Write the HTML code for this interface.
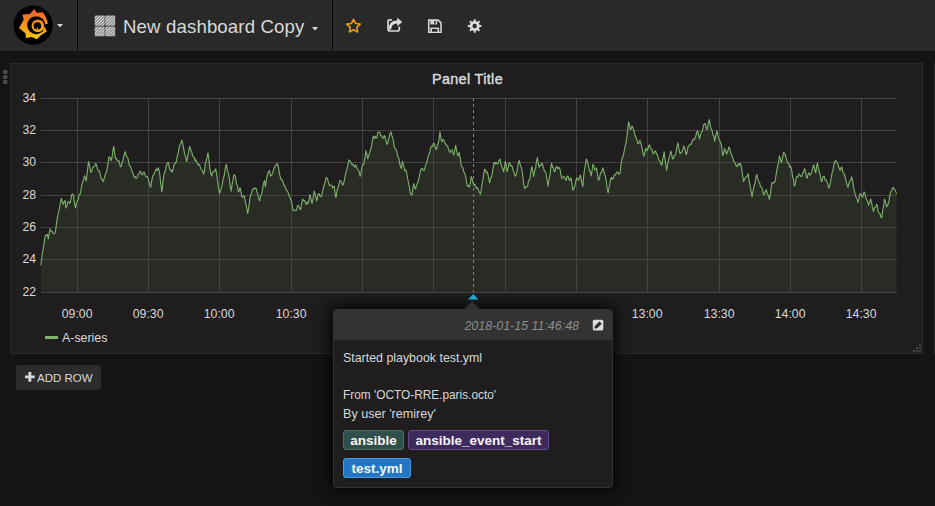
<!DOCTYPE html>
<html><head><meta charset="utf-8">
<style>
*{margin:0;padding:0;box-sizing:border-box}
html,body{width:935px;height:506px;overflow:hidden;background:#141414;font-family:"Liberation Sans",sans-serif;color:#d8d9da}
.abs{position:absolute}
#nav{position:absolute;left:0;top:0;width:935px;height:51px;background:#292929}
.div{position:absolute;top:0;width:1px;height:51px;background:#000;box-shadow:-1px 0 0 #303030,1px 0 0 #303030}
#title{position:absolute;left:123px;top:14px;font-size:18.6px;letter-spacing:0.15px;line-height:26px;color:#d8d9da;white-space:nowrap}
#panel{position:absolute;left:10px;top:63px;width:913px;height:291px;background:#1f1d1d;border:1px solid #2b2a2a}
#ptitle{position:absolute;left:0;width:935px;top:70px;text-align:center;font-size:14.4px;font-weight:400;letter-spacing:0.35px;-webkit-text-stroke:0.45px #d8d9da;line-height:18px;color:#d8d9da}
.yl{position:absolute;left:0;width:36px;text-align:right;font-size:12.2px;line-height:15px;color:#d8d9da}
.xl{position:absolute;top:307px;width:40px;text-align:center;font-size:12.3px;line-height:15px;color:#d8d9da}
#legend{position:absolute;left:62px;top:331px;font-size:12.4px;line-height:15px;color:#d8d9da}
#legline{position:absolute;left:45px;top:336px;width:13px;height:3px;background:#7eb26d}
#addrow{position:absolute;left:16px;top:365px;width:85px;height:25px;background:#2c2c2c;border-radius:3px}
#addrow span{position:absolute;left:21px;top:6px;font-size:11.5px;line-height:15px;color:#d8d9da;white-space:nowrap}
#tip{position:absolute;left:333px;top:309px;width:280px;height:179px;background:#1f1d1d;border:1px solid #333;border-radius:4px;box-shadow:0 0 14px 3px #060606;overflow:hidden}
#tiphead{position:absolute;left:-1px;top:-1px;width:280px;height:31px;background:#333}
#ts{position:absolute;left:-1px;top:9px;width:246px;text-align:right;font-style:italic;font-size:12.45px;line-height:15px;color:#8e8e8e;white-space:nowrap}
.tt{position:absolute;left:9px;font-size:12.4px;line-height:15px;color:#d8d9da;white-space:nowrap}
.tag{position:absolute;height:20px;border-radius:3px;border:1px solid;font-weight:700;font-size:13.5px;line-height:19px;color:#f5f5f5;white-space:nowrap;text-align:center}
</style></head><body>
<div id="nav">
  <svg class="abs" style="left:0;top:0" width="80" height="51" viewBox="0 0 80 51">
    <defs><linearGradient id="lg" gradientUnits="userSpaceOnUse" x1="0" y1="9" x2="0" y2="39"><stop offset="0" stop-color="#f05a28"/><stop offset="1" stop-color="#fbca0a"/></linearGradient></defs>
    <circle cx="33.2" cy="25.1" r="19.6" fill="#000"/>
    <path fill="url(#lg)" d="M34.30,9.00 L36.70,12.70 L42.80,12.20 L45.30,16.00 L47.00,20.00 L47.80,23.80 L45.15,24.26 L44.91,27.45 L46.80,31.60 L41.10,34.90 L36.90,39.30 L31.80,36.90 L26.10,38.00 L25.40,33.20 L19.00,27.90 L23.70,19.80 L22.40,14.40 L29.80,14.10 Z"/>
    <circle cx="36.2" cy="25.2" r="9.0" fill="#000"/>
    <circle cx="37.9" cy="25.7" r="6.3" fill="url(#lg)"/>
    <path fill="url(#lg)" d="M45.51,27.52 L45.35,28.11 L45.14,28.69 L44.90,29.26 L44.62,29.81 L44.31,30.33 L43.97,30.84 L42.85,29.13 L43.07,28.81 L43.26,28.48 L43.44,28.14 L43.59,27.78 L43.72,27.42 L43.82,27.05 Z"/>
    <circle cx="37.4" cy="26.0" r="3.7" fill="#000"/>
    <path fill="url(#lg)" d="M38.70,29.57 L35.79,29.44 L37.30,27.20 Z"/>
    <path d="M57,24 L63,24 L60,27.2 Z" fill="#d8d9da"/>
  </svg>
  <div class="div" style="left:77px"></div>
  <svg class="abs" style="left:94px;top:15px" width="22" height="22" viewBox="0 0 22 22">
    <defs><pattern id="hatch" width="2.2" height="2.2" patternUnits="userSpaceOnUse" patternTransform="rotate(45)"><rect width="1.2" height="2.2" fill="#e4e4e4"/><rect x="1.2" width="1" height="2.2" fill="#8a8a8a"/></pattern></defs>
    <rect x="0.7" y="0.6" width="10" height="10.2" rx="1" fill="url(#hatch)"/>
    <rect x="11.2" y="0.6" width="10" height="10.2" rx="1" fill="url(#hatch)"/>
    <rect x="0.7" y="11.4" width="10" height="9.8" rx="1" fill="url(#hatch)"/>
    <rect x="11.2" y="11.4" width="10" height="9.8" rx="1" fill="url(#hatch)"/>
  </svg>
  <div id="title">New dashboard Copy</div>
  <svg class="abs" style="left:311px;top:26px" width="9" height="6"><path d="M1,1 L7,1 L4,4.5 Z" fill="#d8d9da"/></svg>
  <div class="div" style="left:332px"></div>
  <svg class="abs" style="left:345px;top:17px" width="18" height="18" viewBox="0 0 18 18"><path d="M8.50,2.30 L10.56,6.47 L15.16,7.14 L11.83,10.38 L12.61,14.96 L8.50,12.80 L4.39,14.96 L5.17,10.38 L1.84,7.14 L6.44,6.47 Z" fill="none" stroke="#eb9b1c" stroke-width="1.6" stroke-linejoin="round"/></svg>
  <svg class="abs" style="left:383px;top:14px" width="24" height="22" viewBox="0 0 24 22">
    <path d="M8.8,5.9 L7,5.9 Q5,5.9 5,7.9 L5,15 Q5,17 7,17 L14.3,17 Q16.3,17 16.3,15 L16.3,12.6" fill="none" stroke="#d8d9da" stroke-width="1.7"/>
    <path d="M5.9,15.4 Q5.6,6.8 14.2,6.6 L14.2,3.8 L19.3,8.1 L14.2,12.3 L14.2,9.4 Q8.6,9.3 8.1,15.4 Z" fill="#d8d9da"/>
  </svg>
  <svg class="abs" style="left:424px;top:14px" width="24" height="22" viewBox="0 0 24 22">
    <path d="M4.7,5.9 L14,5.9 L17,8.9 L17,18.2 L4.7,18.2 Z" fill="none" stroke="#d8d9da" stroke-width="1.5"/>
    <rect x="6.3" y="6.3" width="6.8" height="4.1" fill="#d8d9da"/>
    <rect x="10.1" y="7.1" width="1.6" height="2.6" fill="#292929"/>
    <rect x="6.3" y="13.6" width="8.8" height="4.2" fill="#d8d9da"/>
    <rect x="8" y="15" width="5.4" height="2.6" fill="#292929"/>
  </svg>
  <svg class="abs" style="left:463px;top:14px" width="24" height="22" viewBox="0 0 24 22">
    <path d="M10.20,7.23 L10.75,7.09 L10.74,5.17 L12.66,5.17 L12.65,7.09 L13.20,7.23 L14.01,7.56 L14.50,7.85 L15.85,6.49 L17.21,7.85 L15.85,9.20 L16.14,9.69 L16.47,10.50 L16.61,11.05 L18.53,11.04 L18.53,12.96 L16.61,12.95 L16.47,13.50 L16.14,14.31 L15.85,14.80 L17.21,16.15 L15.85,17.51 L14.50,16.15 L14.01,16.44 L13.20,16.77 L12.65,16.91 L12.66,18.83 L10.74,18.83 L10.75,16.91 L10.20,16.77 L9.39,16.44 L8.90,16.15 L7.55,17.51 L6.19,16.15 L7.55,14.80 L7.26,14.31 L6.93,13.50 L6.79,12.95 L4.87,12.96 L4.87,11.04 L6.79,11.05 L6.93,10.50 L7.26,9.69 L7.55,9.20 L6.19,7.85 L7.55,6.49 L8.90,7.85 L9.39,7.56 Z" fill="#d8d9da"/>
    <circle cx="11.7" cy="12.0" r="2.2" fill="#292929"/>
  </svg>
</div>

<!-- drag handle -->
<svg class="abs" style="left:2px;top:69px" width="8" height="17">
  <rect x="1" y="1" width="4.5" height="4" rx="1" fill="#4a4a4a"/>
  <rect x="1" y="6" width="4.5" height="4" rx="1" fill="#4a4a4a"/>
  <rect x="1" y="11" width="4.5" height="4" rx="1" fill="#4a4a4a"/>
</svg>

<div id="panel"></div>
<div class="abs" style="left:934px;top:63px;width:1px;height:291px;background:#2b2a2a"></div>
<div id="ptitle">Panel Title</div>

<svg class="abs" style="left:0;top:0" width="935" height="506">
  <path d="M40.8,265.3 L41.8,257.5 L42.7,251.3 L43.6,246.6 L44.6,239.4 L45.5,235.3 L46.5,235.4 L47.4,234.4 L48.3,239 L49.2,232.8 L50.2,228.8 L51.1,231.2 L52.1,231.3 L53,233.4 L54.1,234 L55.3,232.5 L56.8,221.2 L57.7,216.1 L58.6,211.9 L59.5,208.4 L60.5,202.3 L61.4,198.4 L62.3,202 L63.3,204.4 L64.2,201.5 L65.2,200.6 L65.8,208 L66.9,206.2 L68,201.6 L69,201.9 L69.9,203.4 L70.8,199.7 L71.8,194.6 L72.7,194.1 L73.6,196 L74.5,203.5 L75.5,208 L76.5,203.2 L77.4,200.6 L78.3,199.5 L79.1,194.9 L80,194.4 L80.9,190.8 L81.8,184.7 L82.7,182 L83.6,179.7 L84.5,175.7 L85.3,177.7 L86.2,181 L87.3,171.9 L88.5,161.5 L89.6,166 L90.7,172.2 L91.6,171.8 L92.5,167.9 L93.4,166.8 L94.6,166.2 L95.7,163.3 L96.5,164.8 L97.3,168.6 L98.4,170.8 L99.6,171.3 L101,178.4 L102,178.9 L103.1,181.6 L104,179.2 L104.9,175.7 L105.8,173 L106.7,171.3 L107.8,164.7 L109,156.7 L110.1,157.4 L111.2,160.6 L112.1,156.8 L112.9,150.3 L113.8,146.4 L114.7,153.7 L115.6,158.8 L116.5,158.4 L117.4,160.8 L118.3,160.6 L119.2,161.3 L120.1,166 L121,166.8 L121.9,162.8 L122.7,161.4 L123.6,157 L124.5,153.3 L125.4,151.7 L126.3,155.8 L127.2,157 L128.1,158.7 L128.9,163.8 L129.8,166 L130.7,166.6 L131.6,171 L132.5,171.7 L133.4,174.8 L134.3,177.3 L135.2,176.5 L136.1,178.4 L137.1,177.7 L138.1,174.3 L139,174.3 L140,171.3 L140.9,171.7 L141.8,174.8 L142.7,174.6 L143.6,172.2 L144.5,172.2 L145.3,176 L146.2,176.6 L147.3,176.7 L148.5,179.3 L149.6,184.4 L150.7,187.3 L151.8,180.4 L152.8,175.7 L153.9,174.6 L155.1,171.6 L156.2,168.9 L157.2,170.5 L158.3,167.7 L159.1,170.7 L159.9,175.7 L160.9,185 L161.9,191.8 L162.9,182.4 L164,174 L165.2,171.3 L166.3,166 L167.4,163 L168.5,162.4 L169.4,168 L170.3,170.4 L171.2,169.9 L172,172.2 L172.9,170 L173.8,165.4 L174.7,163.3 L175.6,163.2 L176.5,160.6 L177.4,155.7 L178.3,152.7 L179.2,147.3 L180.1,144.2 L180.9,143.1 L181.8,140.1 L182.7,143.6 L183.6,148.1 L184.6,153.9 L185.6,156.4 L186.6,161.5 L187.7,157.2 L188.7,150.5 L189.8,146.4 L190.7,150.5 L191.6,151.1 L192.5,155.3 L193.4,157 L194.3,157.3 L195.2,161.2 L196.1,159.7 L197,162.4 L198,165.1 L199,164.1 L200,166.2 L200.9,168.9 L201.8,169.7 L202.7,171.1 L203.6,174.2 L204.5,171.2 L205.3,163.7 L206.2,160.8 L207.1,157.4 L208,152.8 L208.9,159.7 L209.8,167.9 L210.7,172.7 L211.6,176 L212.5,173 L213.4,171.5 L214.6,171.2 L215.7,168.8 L216.8,174.8 L217.8,183.1 L218.7,189.2 L219.6,193.7 L220.5,190 L221.4,188.2 L222.3,184 L223.3,178.2 L224.3,175.3 L225.3,167.8 L226.3,164.4 L227.4,170.6 L228.5,174.2 L229.4,178.8 L230.3,186.6 L231.2,191.1 L232.1,184.5 L232.9,180.9 L233.8,175 L234.7,174.9 L235.6,177.7 L236.5,183.8 L237.4,185.8 L238.3,192 L239.2,191.1 L240,187.5 L240.9,191 L241.8,196.4 L242.7,197.3 L243.6,195.8 L244.5,196.4 L245.6,203.2 L246.6,207.1 L247.7,213.3 L248.7,207.6 L249.7,200.1 L250.7,194.6 L251.6,193.2 L252.5,189.6 L253.4,188.4 L254.3,188.9 L255.2,187.9 L256.1,188.4 L257,192.2 L257.9,194.1 L258.7,198.7 L259.6,200.9 L260.6,196.2 L261.7,194 L262.7,188.4 L263.6,183.2 L264.5,180.4 L265.3,186.6 L266.2,181.9 L267.1,176 L268.2,172.5 L269.3,170.6 L270.7,176 L271.8,175.1 L272.8,172.4 L274,168.4 L275.1,166.2 L276,165.5 L276.9,163.5 L277.8,164.7 L278.7,168.8 L279.9,175.7 L281,179.5 L282.1,179.8 L283.1,182.2 L284,185.3 L284.9,185.8 L285.8,188.4 L286.7,190.8 L287.6,191.1 L288.5,193.7 L289.6,197.1 L290.6,199 L291.8,203 L292.9,209.8 L293.8,210.8 L294.7,209.9 L295.6,210.7 L296.5,210.4 L297.4,206 L298.3,205.3 L299.5,208.2 L300.6,209.8 L301.6,203.3 L302.7,199 L303.6,200.7 L304.5,200.4 L305.4,202.7 L306.3,204.5 L307.2,201.8 L308.1,203.5 L309,200.3 L309.8,194.6 L310.9,198.3 L312,203.5 L313.1,198.2 L314.3,191.1 L315.5,195.3 L316.6,200.9 L317.4,198.6 L318.2,193.7 L319.1,193.8 L320,196 L320.9,196.9 L321.8,195.1 L322.9,189.8 L323.9,186.2 L325,182.5 L326.2,177.3 L327.4,178.6 L328.5,182.7 L329.6,185.6 L330.7,185.3 L331.8,185.2 L332.8,188 L334.2,186.2 L335.1,193.4 L336,197.8 L336.9,191.5 L337.8,188 L338.7,185.8 L339.6,180.9 L340.5,180.6 L341.4,181.8 L342.8,185.3 L343.9,182.4 L344.9,177.3 L345.8,172.9 L346.7,170.2 L347.8,165.6 L348.8,159.9 L350,161 L351.2,163.1 L352.1,164.8 L352.9,164.1 L353.8,165.7 L354.7,167.3 L355.6,164.7 L356.5,166.6 L357.4,169.4 L358.3,170.2 L359.2,171.8 L360.1,176.4 L361,173.5 L361.8,167.5 L362.7,164.6 L363.6,164.8 L364.8,158.6 L365.9,150.6 L366.8,153.9 L367.7,158.6 L368.7,156.4 L369.7,152 L370.7,149.7 L371.6,146 L372.5,139.7 L373.4,136.4 L374.3,138.5 L375.2,136.1 L376.1,138.1 L377,137.1 L377.8,132.8 L378.7,131.9 L380,132.8 L380.9,135.9 L381.8,135.8 L382.7,138.1 L383.6,138 L384.5,135.5 L385.6,138.5 L386.8,144.4 L387.9,142.6 L388.9,138.1 L389.9,133.7 L391,131.9 L391.8,135.6 L392.5,137.3 L393.4,140.5 L394.2,146.3 L395.1,148.8 L396,149.3 L396.9,151.5 L397.8,156.7 L398.7,157.7 L399.6,163.1 L400.5,166.7 L401.4,168.4 L402.3,161.3 L403.1,163.5 L404,167.5 L404.9,170.8 L405.8,169.8 L406.7,172.9 L407.6,178.5 L408.5,182.7 L409.4,187.4 L410.3,193.3 L411.1,194.8 L412,195.1 L412.9,187.8 L413.8,183.5 L414.7,187.6 L415.6,188.9 L416.6,185.2 L417.7,182.7 L418.9,178.8 L420.1,172 L421.2,168.6 L422.4,168.4 L423.4,170.5 L424.5,170.2 L425.4,165.8 L426.3,163.1 L427.2,161.2 L428.1,156.5 L429,154.2 L429.9,152 L430.7,147.3 L431.6,146.2 L432.5,146.5 L433.4,143.3 L434.3,143.5 L435.5,148.1 L436.6,149.7 L437.6,144.7 L438.7,141.7 L440,132 L440.9,138.3 L441.8,141.7 L442.9,139.4 L443.9,139.9 L445,143.3 L446.2,145.3 L447.1,145.4 L448,147 L448.9,150.5 L449.8,152.4 L451,150.3 L452.1,149.7 L453,153.5 L453.9,155 L454.8,149.4 L455.7,145.3 L456.8,151.6 L457.8,156 L459.2,152.4 L460.3,158.9 L461.4,166.6 L462.8,167.5 L463.9,172.1 L464.9,173.7 L465.8,177 L466.7,183 L467.6,186.2 L468.5,185.5 L469.4,187.1 L470.3,183.2 L471.2,176.4 L472,178.6 L472.9,182.7 L473.8,185.4 L474.7,184 L475.6,186.2 L476.5,188.5 L477.4,187.5 L478.3,189.8 L479.5,192.5 L480.6,194.2 L481.5,187.5 L482.4,182.7 L483.4,176.7 L484.5,169.3 L485.4,169.7 L486.3,172.5 L487.2,172 L488.1,174.9 L488.9,180.1 L489.8,182.7 L490.7,177.8 L491.6,176.7 L492.5,172 L493.4,166.3 L494.3,162.2 L495.2,163.9 L496.1,162.3 L497,164 L498,163.7 L499,160.1 L500,159 L500.9,163.9 L501.8,166.5 L502.7,168.4 L503.6,171.8 L504.5,167.3 L505.3,161.2 L506.2,165.2 L507.1,171.8 L508,168.4 L508.9,163 L509.8,162.8 L510.7,166.1 L511.6,165.6 L512.5,166.8 L513.4,171.9 L514.2,172.5 L515.1,176.3 L516,175.1 L516.9,171.8 L518,165 L519.2,160.3 L520.3,165.1 L521.4,167.4 L522.5,173.5 L523.5,182.7 L524.6,188.8 L525.7,186.9 L526.7,187 L527.6,186.1 L528.5,180.9 L529.4,179.8 L530.3,176.8 L531.1,169.4 L532,166.5 L532.9,172.2 L533.8,176.3 L534.7,170.5 L535.6,168.5 L536.5,160.9 L537.4,157.6 L538.3,163.1 L539.2,167.4 L540.1,165.3 L540.9,165.4 L541.8,163 L542.7,165.1 L543.6,168.3 L544.5,171.1 L545.4,171.9 L546.3,174.5 L547.2,181.5 L548.1,186.1 L549,179 L549.9,176 L550.7,168.1 L551.6,163 L552.5,167.2 L553.4,167.6 L554.3,171.8 L555.2,170.7 L556.1,166.8 L557,166.5 L558,168.9 L559,167.4 L560,169 L561,175.3 L562.1,178.5 L563.3,176.7 L564.5,176.8 L565.4,179.6 L566.2,180.3 L567.1,176.5 L568,175.9 L568.9,179.5 L569.8,180.3 L571,177.7 L571.9,183.2 L572.8,190.1 L574,188.4 L575.1,184.8 L576,180.2 L576.9,177.7 L577.8,179.9 L578.7,180.3 L579.6,177 L580.5,175 L581.6,181.6 L582.8,186.6 L583.7,176.4 L584.6,168.8 L585.5,164.4 L586.3,159 L587.4,161.4 L588.5,166.1 L589.4,170.3 L590.3,172.1 L591.2,175.9 L592,171 L592.9,164.3 L593.8,165.8 L594.7,169.6 L595.6,169.8 L596.5,167.9 L597.4,173.5 L598.3,180.3 L599.4,178.8 L600.5,172.7 L601.6,172.6 L602.7,167.9 L603.6,170 L604.5,174 L605.4,175.9 L606.3,181 L607.2,188.5 L608.1,192.8 L609,187.3 L609.8,183.9 L610.7,178.5 L611.6,177.3 L612.5,179.5 L613.4,177.7 L614.5,174.5 L615.5,174.9 L616.6,172.3 L617.7,172 L618.9,174.4 L620,173.2 L621,164.5 L622.1,158.1 L623,156.7 L623.9,152.7 L625,146.8 L626.2,142 L627.4,132.6 L628.5,122.1 L629.4,124.6 L630.3,129.6 L631.2,128.8 L632.1,126 L633,127.7 L633.9,130.5 L635,135.6 L636,137.6 L636.9,139.5 L637.8,143.8 L638.8,143.4 L639.9,140.3 L641.1,144.2 L642.3,149.2 L643.1,154.2 L644,156.3 L644.9,151.7 L645.8,148.3 L646.7,150.6 L647.6,150.1 L648.5,146.4 L649.4,144.7 L650.3,147.8 L651.2,149.2 L652.1,149.6 L652.9,153.7 L653.8,153.6 L654.7,151.5 L655.6,151 L656.5,154 L657.4,154.7 L658.3,158.1 L659.2,160.6 L660,161 L660.9,164.1 L661.8,165.2 L663,158 L664.2,151.8 L665.4,161.9 L666.6,170.5 L667.8,163.5 L669,158.1 L669.9,155.4 L670.7,151 L671.6,153.7 L672.5,159 L673.4,158.6 L674.3,155.6 L675.2,155.4 L676.1,151.9 L677,146.2 L677.9,142.9 L679,149 L680,154 L680.9,152.3 L681.8,152.2 L682.8,149.6 L683.9,146 L685,149.1 L686.2,154.8 L687.1,151.9 L688,146.8 L688.9,145.2 L689.8,145 L691,144.3 L692.1,141.5 L693.2,139.1 L694.2,139.7 L695.1,138.1 L696,135.3 L696.9,131.7 L697.8,130.8 L698.7,135.8 L699.6,138.8 L700.5,134.7 L701.4,132.6 L702.5,130.5 L703.5,125.5 L704.4,123.7 L705.3,123.7 L706.2,127.8 L707.1,129.9 L708.2,123.5 L709.4,119.6 L710.3,125.9 L711.2,129 L712.1,130.5 L712.9,135.2 L713.8,136.2 L714.7,141.5 L715.9,134.9 L717,130.8 L718.2,136.9 L719.5,140.6 L720.4,141.9 L721.3,145 L722.7,155.7 L723.6,153 L724.5,148.6 L725.5,150.8 L726.6,154 L727.8,151 L729,146.8 L729.9,148.9 L730.7,153.4 L731.6,154.8 L732.5,156.4 L733.4,160.3 L734.3,162 L735.3,162.9 L736.3,166.4 L737.3,166.4 L738.2,163.8 L739.1,165.3 L740,162.9 L740.9,165.3 L741.8,169.2 L742.7,176.2 L743.6,181.6 L744.7,178.6 L745.7,177.2 L746.9,176.4 L748,173.6 L749.3,181.6 L750.2,186 L751.2,192.7 L752.1,196.8 L753.2,190.2 L754.2,185.2 L755.1,183.2 L756,176.5 L756.9,174.5 L757.8,179.1 L758.7,181.6 L759.6,182.6 L760.5,186.8 L761.4,187 L762.3,188.8 L763.1,193.2 L764,195 L765.1,191.8 L766.3,189.6 L767.3,193.8 L768.4,195.1 L769.4,199.4 L770.3,194.8 L771.1,187.4 L772,182.5 L772.9,183.5 L773.8,182 L774.7,182.5 L775.6,178.2 L776.5,171.9 L777.4,167.4 L778.5,162.5 L779.5,155.8 L780.4,158.8 L781.3,162.9 L782.5,158.1 L783.6,152.3 L784.8,153.7 L785.9,156.7 L786.8,160.5 L787.7,162.9 L788.7,163.3 L789.7,167.1 L790.6,166.3 L791.6,169.2 L792.5,176 L793.4,179.2 L794.3,186.1 L795.2,184.3 L796.1,178.7 L797,176.3 L798,176.7 L799,173.9 L800,175 L800.9,176.4 L801.8,176.5 L802.7,172.5 L803.6,172.4 L804.5,168.5 L805.4,171.2 L806.2,176.4 L807.1,178.3 L808,174.1 L808.9,172.9 L809.8,175 L810.7,174.7 L812.1,170.3 L813,166.3 L813.9,164.9 L814.8,170.3 L815.7,172.9 L816.5,167.2 L817.4,162.8 L818.5,168.9 L819.6,172.9 L820.5,176.3 L821.4,181.8 L822.2,180.6 L823.1,176.5 L824.2,176.3 L825.2,180.3 L826.3,180.1 L827.5,183 L828.8,188.1 L830,184.7 L831.2,178.3 L832.1,172.6 L832.9,170.6 L833.8,164.9 L834.7,162 L835.6,160.5 L836.5,162.3 L837.4,163.1 L838.3,164.9 L839.2,168.8 L840.1,170.3 L841,168 L841.8,166.9 L842.7,171.4 L843.6,173.1 L844.7,175.1 L845.7,179.4 L846.9,184.6 L848,187.4 L848.9,183.1 L849.8,181.2 L850.7,180.2 L851.6,176.7 L852.8,181.9 L853.9,189.2 L855,193.7 L856,197.2 L856.9,198.5 L857.8,202.5 L858.8,199.4 L859.9,193.6 L861.1,194.4 L862.3,197.2 L863.1,195.6 L864,191.8 L864.9,193.2 L865.8,197.7 L866.7,199.8 L867.6,201.2 L868.5,205.2 L869.5,202.9 L870.6,199 L871.6,202.6 L872.5,208 L873.5,211.4 L874.5,207.7 L875.5,207.4 L876.5,204.3 L877.4,206 L878.3,211.8 L879.2,213.2 L880.1,213.7 L880.9,217.1 L881.8,217.7 L882.7,210.5 L883.6,206.5 L884.5,199 L885.5,201.7 L886.6,207 L887.8,205 L889,200.7 L889.9,195.1 L890.7,191.8 L891.6,190.9 L892.5,188.2 L893.4,187.4 L894.3,189.5 L895.2,190.1 L896.6,193.6 L896.6,292 L40.8,292 Z" fill="rgba(126,178,109,0.1)"/>
  <g stroke="#444" stroke-width="1" shape-rendering="crispEdges"><line x1="41" y1="98.5" x2="896.5" y2="98.5"/><line x1="41" y1="130.5" x2="896.5" y2="130.5"/><line x1="41" y1="162.5" x2="896.5" y2="162.5"/><line x1="41" y1="195.5" x2="896.5" y2="195.5"/><line x1="41" y1="227.5" x2="896.5" y2="227.5"/><line x1="41" y1="259.5" x2="896.5" y2="259.5"/><line x1="41" y1="292.5" x2="896.5" y2="292.5"/><line x1="77.5" y1="98" x2="77.5" y2="292"/><line x1="148.5" y1="98" x2="148.5" y2="292"/><line x1="219.5" y1="98" x2="219.5" y2="292"/><line x1="291.5" y1="98" x2="291.5" y2="292"/><line x1="362.5" y1="98" x2="362.5" y2="292"/><line x1="433.5" y1="98" x2="433.5" y2="292"/><line x1="505.5" y1="98" x2="505.5" y2="292"/><line x1="576.5" y1="98" x2="576.5" y2="292"/><line x1="647.5" y1="98" x2="647.5" y2="292"/><line x1="719.5" y1="98" x2="719.5" y2="292"/><line x1="790.5" y1="98" x2="790.5" y2="292"/><line x1="861.5" y1="98" x2="861.5" y2="292"/></g>
  <path d="M40.8,265.3 L41.8,257.5 L42.7,251.3 L43.6,246.6 L44.6,239.4 L45.5,235.3 L46.5,235.4 L47.4,234.4 L48.3,239 L49.2,232.8 L50.2,228.8 L51.1,231.2 L52.1,231.3 L53,233.4 L54.1,234 L55.3,232.5 L56.8,221.2 L57.7,216.1 L58.6,211.9 L59.5,208.4 L60.5,202.3 L61.4,198.4 L62.3,202 L63.3,204.4 L64.2,201.5 L65.2,200.6 L65.8,208 L66.9,206.2 L68,201.6 L69,201.9 L69.9,203.4 L70.8,199.7 L71.8,194.6 L72.7,194.1 L73.6,196 L74.5,203.5 L75.5,208 L76.5,203.2 L77.4,200.6 L78.3,199.5 L79.1,194.9 L80,194.4 L80.9,190.8 L81.8,184.7 L82.7,182 L83.6,179.7 L84.5,175.7 L85.3,177.7 L86.2,181 L87.3,171.9 L88.5,161.5 L89.6,166 L90.7,172.2 L91.6,171.8 L92.5,167.9 L93.4,166.8 L94.6,166.2 L95.7,163.3 L96.5,164.8 L97.3,168.6 L98.4,170.8 L99.6,171.3 L101,178.4 L102,178.9 L103.1,181.6 L104,179.2 L104.9,175.7 L105.8,173 L106.7,171.3 L107.8,164.7 L109,156.7 L110.1,157.4 L111.2,160.6 L112.1,156.8 L112.9,150.3 L113.8,146.4 L114.7,153.7 L115.6,158.8 L116.5,158.4 L117.4,160.8 L118.3,160.6 L119.2,161.3 L120.1,166 L121,166.8 L121.9,162.8 L122.7,161.4 L123.6,157 L124.5,153.3 L125.4,151.7 L126.3,155.8 L127.2,157 L128.1,158.7 L128.9,163.8 L129.8,166 L130.7,166.6 L131.6,171 L132.5,171.7 L133.4,174.8 L134.3,177.3 L135.2,176.5 L136.1,178.4 L137.1,177.7 L138.1,174.3 L139,174.3 L140,171.3 L140.9,171.7 L141.8,174.8 L142.7,174.6 L143.6,172.2 L144.5,172.2 L145.3,176 L146.2,176.6 L147.3,176.7 L148.5,179.3 L149.6,184.4 L150.7,187.3 L151.8,180.4 L152.8,175.7 L153.9,174.6 L155.1,171.6 L156.2,168.9 L157.2,170.5 L158.3,167.7 L159.1,170.7 L159.9,175.7 L160.9,185 L161.9,191.8 L162.9,182.4 L164,174 L165.2,171.3 L166.3,166 L167.4,163 L168.5,162.4 L169.4,168 L170.3,170.4 L171.2,169.9 L172,172.2 L172.9,170 L173.8,165.4 L174.7,163.3 L175.6,163.2 L176.5,160.6 L177.4,155.7 L178.3,152.7 L179.2,147.3 L180.1,144.2 L180.9,143.1 L181.8,140.1 L182.7,143.6 L183.6,148.1 L184.6,153.9 L185.6,156.4 L186.6,161.5 L187.7,157.2 L188.7,150.5 L189.8,146.4 L190.7,150.5 L191.6,151.1 L192.5,155.3 L193.4,157 L194.3,157.3 L195.2,161.2 L196.1,159.7 L197,162.4 L198,165.1 L199,164.1 L200,166.2 L200.9,168.9 L201.8,169.7 L202.7,171.1 L203.6,174.2 L204.5,171.2 L205.3,163.7 L206.2,160.8 L207.1,157.4 L208,152.8 L208.9,159.7 L209.8,167.9 L210.7,172.7 L211.6,176 L212.5,173 L213.4,171.5 L214.6,171.2 L215.7,168.8 L216.8,174.8 L217.8,183.1 L218.7,189.2 L219.6,193.7 L220.5,190 L221.4,188.2 L222.3,184 L223.3,178.2 L224.3,175.3 L225.3,167.8 L226.3,164.4 L227.4,170.6 L228.5,174.2 L229.4,178.8 L230.3,186.6 L231.2,191.1 L232.1,184.5 L232.9,180.9 L233.8,175 L234.7,174.9 L235.6,177.7 L236.5,183.8 L237.4,185.8 L238.3,192 L239.2,191.1 L240,187.5 L240.9,191 L241.8,196.4 L242.7,197.3 L243.6,195.8 L244.5,196.4 L245.6,203.2 L246.6,207.1 L247.7,213.3 L248.7,207.6 L249.7,200.1 L250.7,194.6 L251.6,193.2 L252.5,189.6 L253.4,188.4 L254.3,188.9 L255.2,187.9 L256.1,188.4 L257,192.2 L257.9,194.1 L258.7,198.7 L259.6,200.9 L260.6,196.2 L261.7,194 L262.7,188.4 L263.6,183.2 L264.5,180.4 L265.3,186.6 L266.2,181.9 L267.1,176 L268.2,172.5 L269.3,170.6 L270.7,176 L271.8,175.1 L272.8,172.4 L274,168.4 L275.1,166.2 L276,165.5 L276.9,163.5 L277.8,164.7 L278.7,168.8 L279.9,175.7 L281,179.5 L282.1,179.8 L283.1,182.2 L284,185.3 L284.9,185.8 L285.8,188.4 L286.7,190.8 L287.6,191.1 L288.5,193.7 L289.6,197.1 L290.6,199 L291.8,203 L292.9,209.8 L293.8,210.8 L294.7,209.9 L295.6,210.7 L296.5,210.4 L297.4,206 L298.3,205.3 L299.5,208.2 L300.6,209.8 L301.6,203.3 L302.7,199 L303.6,200.7 L304.5,200.4 L305.4,202.7 L306.3,204.5 L307.2,201.8 L308.1,203.5 L309,200.3 L309.8,194.6 L310.9,198.3 L312,203.5 L313.1,198.2 L314.3,191.1 L315.5,195.3 L316.6,200.9 L317.4,198.6 L318.2,193.7 L319.1,193.8 L320,196 L320.9,196.9 L321.8,195.1 L322.9,189.8 L323.9,186.2 L325,182.5 L326.2,177.3 L327.4,178.6 L328.5,182.7 L329.6,185.6 L330.7,185.3 L331.8,185.2 L332.8,188 L334.2,186.2 L335.1,193.4 L336,197.8 L336.9,191.5 L337.8,188 L338.7,185.8 L339.6,180.9 L340.5,180.6 L341.4,181.8 L342.8,185.3 L343.9,182.4 L344.9,177.3 L345.8,172.9 L346.7,170.2 L347.8,165.6 L348.8,159.9 L350,161 L351.2,163.1 L352.1,164.8 L352.9,164.1 L353.8,165.7 L354.7,167.3 L355.6,164.7 L356.5,166.6 L357.4,169.4 L358.3,170.2 L359.2,171.8 L360.1,176.4 L361,173.5 L361.8,167.5 L362.7,164.6 L363.6,164.8 L364.8,158.6 L365.9,150.6 L366.8,153.9 L367.7,158.6 L368.7,156.4 L369.7,152 L370.7,149.7 L371.6,146 L372.5,139.7 L373.4,136.4 L374.3,138.5 L375.2,136.1 L376.1,138.1 L377,137.1 L377.8,132.8 L378.7,131.9 L380,132.8 L380.9,135.9 L381.8,135.8 L382.7,138.1 L383.6,138 L384.5,135.5 L385.6,138.5 L386.8,144.4 L387.9,142.6 L388.9,138.1 L389.9,133.7 L391,131.9 L391.8,135.6 L392.5,137.3 L393.4,140.5 L394.2,146.3 L395.1,148.8 L396,149.3 L396.9,151.5 L397.8,156.7 L398.7,157.7 L399.6,163.1 L400.5,166.7 L401.4,168.4 L402.3,161.3 L403.1,163.5 L404,167.5 L404.9,170.8 L405.8,169.8 L406.7,172.9 L407.6,178.5 L408.5,182.7 L409.4,187.4 L410.3,193.3 L411.1,194.8 L412,195.1 L412.9,187.8 L413.8,183.5 L414.7,187.6 L415.6,188.9 L416.6,185.2 L417.7,182.7 L418.9,178.8 L420.1,172 L421.2,168.6 L422.4,168.4 L423.4,170.5 L424.5,170.2 L425.4,165.8 L426.3,163.1 L427.2,161.2 L428.1,156.5 L429,154.2 L429.9,152 L430.7,147.3 L431.6,146.2 L432.5,146.5 L433.4,143.3 L434.3,143.5 L435.5,148.1 L436.6,149.7 L437.6,144.7 L438.7,141.7 L440,132 L440.9,138.3 L441.8,141.7 L442.9,139.4 L443.9,139.9 L445,143.3 L446.2,145.3 L447.1,145.4 L448,147 L448.9,150.5 L449.8,152.4 L451,150.3 L452.1,149.7 L453,153.5 L453.9,155 L454.8,149.4 L455.7,145.3 L456.8,151.6 L457.8,156 L459.2,152.4 L460.3,158.9 L461.4,166.6 L462.8,167.5 L463.9,172.1 L464.9,173.7 L465.8,177 L466.7,183 L467.6,186.2 L468.5,185.5 L469.4,187.1 L470.3,183.2 L471.2,176.4 L472,178.6 L472.9,182.7 L473.8,185.4 L474.7,184 L475.6,186.2 L476.5,188.5 L477.4,187.5 L478.3,189.8 L479.5,192.5 L480.6,194.2 L481.5,187.5 L482.4,182.7 L483.4,176.7 L484.5,169.3 L485.4,169.7 L486.3,172.5 L487.2,172 L488.1,174.9 L488.9,180.1 L489.8,182.7 L490.7,177.8 L491.6,176.7 L492.5,172 L493.4,166.3 L494.3,162.2 L495.2,163.9 L496.1,162.3 L497,164 L498,163.7 L499,160.1 L500,159 L500.9,163.9 L501.8,166.5 L502.7,168.4 L503.6,171.8 L504.5,167.3 L505.3,161.2 L506.2,165.2 L507.1,171.8 L508,168.4 L508.9,163 L509.8,162.8 L510.7,166.1 L511.6,165.6 L512.5,166.8 L513.4,171.9 L514.2,172.5 L515.1,176.3 L516,175.1 L516.9,171.8 L518,165 L519.2,160.3 L520.3,165.1 L521.4,167.4 L522.5,173.5 L523.5,182.7 L524.6,188.8 L525.7,186.9 L526.7,187 L527.6,186.1 L528.5,180.9 L529.4,179.8 L530.3,176.8 L531.1,169.4 L532,166.5 L532.9,172.2 L533.8,176.3 L534.7,170.5 L535.6,168.5 L536.5,160.9 L537.4,157.6 L538.3,163.1 L539.2,167.4 L540.1,165.3 L540.9,165.4 L541.8,163 L542.7,165.1 L543.6,168.3 L544.5,171.1 L545.4,171.9 L546.3,174.5 L547.2,181.5 L548.1,186.1 L549,179 L549.9,176 L550.7,168.1 L551.6,163 L552.5,167.2 L553.4,167.6 L554.3,171.8 L555.2,170.7 L556.1,166.8 L557,166.5 L558,168.9 L559,167.4 L560,169 L561,175.3 L562.1,178.5 L563.3,176.7 L564.5,176.8 L565.4,179.6 L566.2,180.3 L567.1,176.5 L568,175.9 L568.9,179.5 L569.8,180.3 L571,177.7 L571.9,183.2 L572.8,190.1 L574,188.4 L575.1,184.8 L576,180.2 L576.9,177.7 L577.8,179.9 L578.7,180.3 L579.6,177 L580.5,175 L581.6,181.6 L582.8,186.6 L583.7,176.4 L584.6,168.8 L585.5,164.4 L586.3,159 L587.4,161.4 L588.5,166.1 L589.4,170.3 L590.3,172.1 L591.2,175.9 L592,171 L592.9,164.3 L593.8,165.8 L594.7,169.6 L595.6,169.8 L596.5,167.9 L597.4,173.5 L598.3,180.3 L599.4,178.8 L600.5,172.7 L601.6,172.6 L602.7,167.9 L603.6,170 L604.5,174 L605.4,175.9 L606.3,181 L607.2,188.5 L608.1,192.8 L609,187.3 L609.8,183.9 L610.7,178.5 L611.6,177.3 L612.5,179.5 L613.4,177.7 L614.5,174.5 L615.5,174.9 L616.6,172.3 L617.7,172 L618.9,174.4 L620,173.2 L621,164.5 L622.1,158.1 L623,156.7 L623.9,152.7 L625,146.8 L626.2,142 L627.4,132.6 L628.5,122.1 L629.4,124.6 L630.3,129.6 L631.2,128.8 L632.1,126 L633,127.7 L633.9,130.5 L635,135.6 L636,137.6 L636.9,139.5 L637.8,143.8 L638.8,143.4 L639.9,140.3 L641.1,144.2 L642.3,149.2 L643.1,154.2 L644,156.3 L644.9,151.7 L645.8,148.3 L646.7,150.6 L647.6,150.1 L648.5,146.4 L649.4,144.7 L650.3,147.8 L651.2,149.2 L652.1,149.6 L652.9,153.7 L653.8,153.6 L654.7,151.5 L655.6,151 L656.5,154 L657.4,154.7 L658.3,158.1 L659.2,160.6 L660,161 L660.9,164.1 L661.8,165.2 L663,158 L664.2,151.8 L665.4,161.9 L666.6,170.5 L667.8,163.5 L669,158.1 L669.9,155.4 L670.7,151 L671.6,153.7 L672.5,159 L673.4,158.6 L674.3,155.6 L675.2,155.4 L676.1,151.9 L677,146.2 L677.9,142.9 L679,149 L680,154 L680.9,152.3 L681.8,152.2 L682.8,149.6 L683.9,146 L685,149.1 L686.2,154.8 L687.1,151.9 L688,146.8 L688.9,145.2 L689.8,145 L691,144.3 L692.1,141.5 L693.2,139.1 L694.2,139.7 L695.1,138.1 L696,135.3 L696.9,131.7 L697.8,130.8 L698.7,135.8 L699.6,138.8 L700.5,134.7 L701.4,132.6 L702.5,130.5 L703.5,125.5 L704.4,123.7 L705.3,123.7 L706.2,127.8 L707.1,129.9 L708.2,123.5 L709.4,119.6 L710.3,125.9 L711.2,129 L712.1,130.5 L712.9,135.2 L713.8,136.2 L714.7,141.5 L715.9,134.9 L717,130.8 L718.2,136.9 L719.5,140.6 L720.4,141.9 L721.3,145 L722.7,155.7 L723.6,153 L724.5,148.6 L725.5,150.8 L726.6,154 L727.8,151 L729,146.8 L729.9,148.9 L730.7,153.4 L731.6,154.8 L732.5,156.4 L733.4,160.3 L734.3,162 L735.3,162.9 L736.3,166.4 L737.3,166.4 L738.2,163.8 L739.1,165.3 L740,162.9 L740.9,165.3 L741.8,169.2 L742.7,176.2 L743.6,181.6 L744.7,178.6 L745.7,177.2 L746.9,176.4 L748,173.6 L749.3,181.6 L750.2,186 L751.2,192.7 L752.1,196.8 L753.2,190.2 L754.2,185.2 L755.1,183.2 L756,176.5 L756.9,174.5 L757.8,179.1 L758.7,181.6 L759.6,182.6 L760.5,186.8 L761.4,187 L762.3,188.8 L763.1,193.2 L764,195 L765.1,191.8 L766.3,189.6 L767.3,193.8 L768.4,195.1 L769.4,199.4 L770.3,194.8 L771.1,187.4 L772,182.5 L772.9,183.5 L773.8,182 L774.7,182.5 L775.6,178.2 L776.5,171.9 L777.4,167.4 L778.5,162.5 L779.5,155.8 L780.4,158.8 L781.3,162.9 L782.5,158.1 L783.6,152.3 L784.8,153.7 L785.9,156.7 L786.8,160.5 L787.7,162.9 L788.7,163.3 L789.7,167.1 L790.6,166.3 L791.6,169.2 L792.5,176 L793.4,179.2 L794.3,186.1 L795.2,184.3 L796.1,178.7 L797,176.3 L798,176.7 L799,173.9 L800,175 L800.9,176.4 L801.8,176.5 L802.7,172.5 L803.6,172.4 L804.5,168.5 L805.4,171.2 L806.2,176.4 L807.1,178.3 L808,174.1 L808.9,172.9 L809.8,175 L810.7,174.7 L812.1,170.3 L813,166.3 L813.9,164.9 L814.8,170.3 L815.7,172.9 L816.5,167.2 L817.4,162.8 L818.5,168.9 L819.6,172.9 L820.5,176.3 L821.4,181.8 L822.2,180.6 L823.1,176.5 L824.2,176.3 L825.2,180.3 L826.3,180.1 L827.5,183 L828.8,188.1 L830,184.7 L831.2,178.3 L832.1,172.6 L832.9,170.6 L833.8,164.9 L834.7,162 L835.6,160.5 L836.5,162.3 L837.4,163.1 L838.3,164.9 L839.2,168.8 L840.1,170.3 L841,168 L841.8,166.9 L842.7,171.4 L843.6,173.1 L844.7,175.1 L845.7,179.4 L846.9,184.6 L848,187.4 L848.9,183.1 L849.8,181.2 L850.7,180.2 L851.6,176.7 L852.8,181.9 L853.9,189.2 L855,193.7 L856,197.2 L856.9,198.5 L857.8,202.5 L858.8,199.4 L859.9,193.6 L861.1,194.4 L862.3,197.2 L863.1,195.6 L864,191.8 L864.9,193.2 L865.8,197.7 L866.7,199.8 L867.6,201.2 L868.5,205.2 L869.5,202.9 L870.6,199 L871.6,202.6 L872.5,208 L873.5,211.4 L874.5,207.7 L875.5,207.4 L876.5,204.3 L877.4,206 L878.3,211.8 L879.2,213.2 L880.1,213.7 L880.9,217.1 L881.8,217.7 L882.7,210.5 L883.6,206.5 L884.5,199 L885.5,201.7 L886.6,207 L887.8,205 L889,200.7 L889.9,195.1 L890.7,191.8 L891.6,190.9 L892.5,188.2 L893.4,187.4 L894.3,189.5 L895.2,190.1 L896.6,193.6" fill="none" stroke="#7eb26d" stroke-width="1.1" stroke-linejoin="round"/>
  <line x1="473.5" y1="98" x2="473.5" y2="292" stroke="#1fa6d6" stroke-width="1" stroke-dasharray="3,3"/>
  
  <g fill="#464646">
    <rect x="919" y="344" width="2" height="2"/>
    <rect x="916" y="347" width="2" height="2"/><rect x="919" y="347" width="2" height="2"/>
    <rect x="913" y="350" width="2" height="2"/><rect x="916" y="350" width="2" height="2"/><rect x="919" y="350" width="2" height="2"/>
  </g>
</svg>
<div class="yl" style="top:91.0px">34</div><div class="yl" style="top:123.0px">32</div><div class="yl" style="top:155.0px">30</div><div class="yl" style="top:188.0px">28</div><div class="yl" style="top:220.0px">26</div><div class="yl" style="top:252.0px">24</div><div class="yl" style="top:285.0px">22</div>
<div class="xl" style="left:57.1px">09:00</div><div class="xl" style="left:128.1px">09:30</div><div class="xl" style="left:199.1px">10:00</div><div class="xl" style="left:271.1px">10:30</div><div class="xl" style="left:627.1px">13:00</div><div class="xl" style="left:699.1px">13:30</div><div class="xl" style="left:770.1px">14:00</div><div class="xl" style="left:841.1px">14:30</div>
<div id="legline"></div>
<div id="legend">A-series</div>

<div id="addrow"><svg class="abs" style="left:8.8px;top:7.4px" width="10" height="10"><path d="M3.4,0 L6.3,0 L6.3,3.4 L9.7,3.4 L9.7,6.3 L6.3,6.3 L6.3,9.7 L3.4,9.7 L3.4,6.3 L0,6.3 L0,3.4 L3.4,3.4 Z" fill="#d8d9da"/></svg><span>ADD ROW</span></div>

<!-- tooltip -->
<div id="tip">
  <div id="tiphead"></div>
  <div id="ts">2018-01-15 11:46:48</div>
  <svg class="abs" style="left:258px;top:9px" width="12" height="12" viewBox="0 0 12 12">
    <rect x="0.8" y="0.7" width="10.5" height="10.9" rx="1.6" fill="#dcdcdc"/>
    <path d="M2.4,9.6 L2.9,7.1 L7.5,2.5 L9.7,4.7 L5.1,9.2 Z" fill="#2a2a2a"/>
  </svg>
  <div class="tt" style="top:41px">Started playbook test.yml</div>
  <div class="tt" style="top:78px;font-size:11.85px">From 'OCTO-RRE.paris.octo'</div>
  <div class="tt" style="top:97px;font-size:12.6px">By user 'remirey'</div>
  <div class="tag" style="left:9px;top:120px;width:61px;background:#2f4f4d;border-color:#4d6d6b">ansible</div>
  <div class="tag" style="left:74px;top:120px;width:141px;background:#3f2a5e;border-color:#614a86">ansible_event_start</div>
  <div class="tag" style="left:9px;top:148px;width:68px;background:#2376c4;border-color:#4a98e0">test.yml</div>
</div>
<svg class="abs" style="left:463px;top:300px" width="18" height="10"><path d="M1,9.5 L9,1.5 L17,9.5 Z" fill="#333"/></svg>
<svg class="abs" style="left:0;top:0" width="935" height="506"><path d="M468,299.5 L478.5,299.5 L473.2,294 Z" fill="#1fa6d6"/></svg>
</body></html>
